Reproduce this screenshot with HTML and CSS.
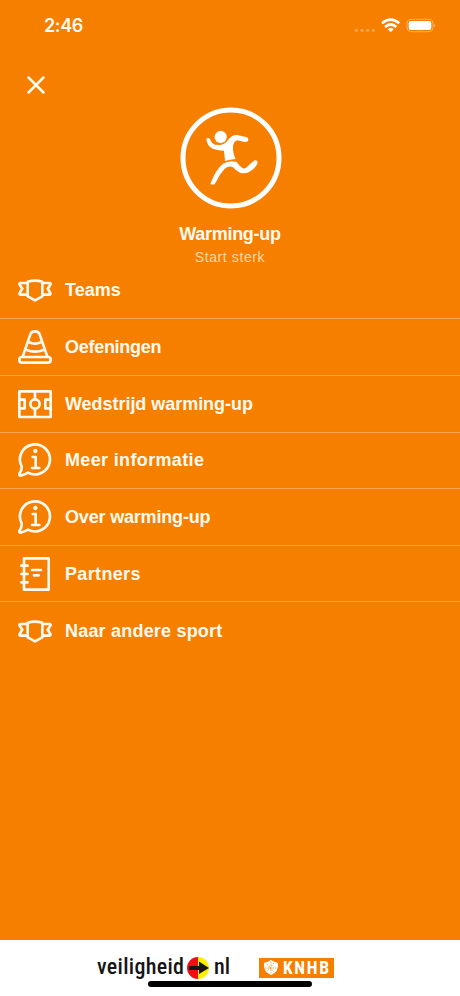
FILE: index.html
```html
<!DOCTYPE html>
<html lang="nl">
<head>
<meta charset="utf-8">
<meta name="viewport" content="width=device-width">
<title>Warming-up</title>
<link rel="stylesheet" href="styles.css">
</head>
<body>
<svg class="defs" width="0" height="0">
  <symbol id="shield" viewBox="0 0 102 102">
    <path d="M29 26Q51 20 73 26V70L51 82L29 70ZM29 30H7Q3 31 5 35L13 47L5 60Q3 64 7 65H29M73 30H95Q99 31 97 35L89 47L97 60Q99 64 95 65H73"/>
  </symbol>
  <symbol id="info" viewBox="0 0 102 102">
    <path d="M11 70A45 45 0 1 1 30 89Q20 95 8 98Q1 98 5 91Q12 82 11 70Z"/>
    <path d="M44 42H53V74M42 75H64"/><circle class="dot" cx="52" cy="24" r="6.500"/>
  </symbol>
</svg>
<div class="screen">
  <header class="status">
    <span class="time">2:46</span>
    <svg class="signals" width="84" height="18" viewBox="0 0 252 54">
      <g fill="#fff" opacity=".3"><circle cx="7" cy="34" r="5"/><circle cx="24" cy="34" r="5"/><circle cx="41" cy="34" r="5"/><circle cx="58" cy="34" r="5"/></g>
      <g fill="none" stroke="#fff" stroke-width="8"><path d="M84 13Q110 -9 136 13M93 24Q110 9 127 24"/></g>
      <path d="M101 31Q110 23 119 31L110 40Z" fill="#fff"/>
      <rect x="159" y="1" width="78" height="37" rx="12" fill="none" stroke="#fff" stroke-opacity=".4" stroke-width="3"/>
      <rect x="164" y="6" width="68" height="27" rx="7" fill="#fff"/>
      <path d="M241 14Q247 19 241 25Z" fill="#fff" opacity=".5"/>
    </svg>
  </header>
  <svg class="close" width="18" height="18" viewBox="0 0 18 18"><path d="M1.500 1.500L16.500 16.500M16.500 1.500L1.500 16.500"/></svg>
  <div class="hero">
    <svg class="runner" width="102" height="102" viewBox="28 35 306 306">
      <circle cx="181" cy="188" r="144" fill="none" stroke="#fff" stroke-width="15"/>
      <circle cx="150" cy="125" r="18.500" fill="#fff"/>
      <path d="M107 130Q113 126 118 131Q122 144 133 148L150 149Q167 144 174 132Q183 119 199 119L229 126Q236 132 231 138Q227 142 218 139L200 135Q189 139 187 152Q186 174 195 191Q178 193 163 197L160 166Q145 166 126 160Q108 150 107 130Z" fill="#fff"/>
      <path d="M119 266Q134 223 157 205Q177 193 198 200Q205 211 216 219Q226 221 234 210L252 195Q260 193 261 202Q256 216 240 227Q227 237 208 232Q195 226 187 216Q176 210 162 220Q146 237 136 260L132 267Q125 269 119 266Z" fill="#fff"/>
    </svg>
    <h1>Warming-up</h1>
    <p>Start sterk</p>
  </div>
  <nav>
    <a class="row teams"><svg class="icon"><use href="#shield"/></svg><span>Teams</span></a>
    <a class="row exercises"><svg class="icon" viewBox="0 0 102 102"><rect x="4" y="81" width="94" height="17" rx="8"/><path d="M14 80L37 13Q40 4 51 4Q62 4 65 13L88 80M32 36Q51 46 70 36M24 59Q51 71 78 59"/></svg><span>Oefeningen</span></a>
    <a class="row match"><svg class="icon" viewBox="0 0 102 102"><path d="M4 13H98V90H4ZM51 13V36M51 67V90M4 38H20V64H4M98 38H82V64H98"/><circle cx="51" cy="51" r="14"/></svg><span>Wedstrijd warming-up</span></a>
    <a class="row more"><svg class="icon"><use href="#info"/></svg><span>Meer informatie</span></a>
    <a class="row about"><svg class="icon"><use href="#info"/></svg><span>Over warming-up</span></a>
    <a class="row partners"><svg class="icon" viewBox="0 0 102 102"><path d="M18 4H92V98H18ZM10 26H29M10 51H29M10 76H29M42 39H69M48 55H62"/></svg><span>Partners</span></a>
    <a class="row sport"><svg class="icon"><use href="#shield"/></svg><span>Naar andere sport</span></a>
  </nav>
  <footer>
    <div class="safety">
      <svg width="136" height="32" viewBox="0 0 136 32">
        <text x="0" y="24" textLength="87" lengthAdjust="spacing">veiligheid</text>
        <path d="M101 7A11 11 0 0 0 101 29Z" fill="#f20d12"/><path d="M101 7A11 11 0 0 1 101 29Z" fill="#ffed00"/>
        <path d="M92 16H102V11.500L112 18L102 24V20H92Z"/>
        <text x="117" y="24" textLength="16" lengthAdjust="spacing">nl</text>
      </svg>
    </div>
    <div class="knhb">
      <svg width="75" height="20" viewBox="0 0 75 20">
        <path d="M5 5Q9 4 12 2Q15 4 19 5Q20 14 12 17Q4 14 5 5Z" fill="#fff"/>
        <path d="M8 6L15 14M15 5L8 13M6 10H18M12 4V15" stroke="#f77f00" stroke-width=".7" stroke-dasharray="1.500 1"/>
        <text x="24" y="16.200" textLength="46" lengthAdjust="spacing">KNHB</text>
      </svg>
    </div>
    <div class="home"></div>
  </footer>
</div>
</body>
</html>
```
FILE: styles.css
```css
* { box-sizing: border-box; }
body { margin: 0; background: #f77f00; color: #fffaf0; font-family: "Liberation Sans", Arial, sans-serif; }
.defs { position: absolute; }
.screen { width: 460px; height: 996px; display: flex; flex-direction: column; overflow: hidden; }
.status { height: 76px; padding: 16px 22px 0 44px; display: flex; justify-content: space-between; align-items: flex-start; }
.time { font: 600 18px/20px Inter, sans-serif; letter-spacing: -0.4px; }
.signals { margin-top: 3px; overflow: visible; }
.close { margin-left: 27px; stroke: #fffaf0; stroke-width: 2.5; stroke-linecap: round; flex: none; }
.hero { height: 168.6px; padding-top: 13px; display: flex; flex-direction: column; align-items: center; }
.runner { flex: none; margin-left: 1px; }
h1 { margin: 14px 0 0; font-size: 18px; line-height: 22px; letter-spacing: -0.3px; }
p { margin: 4px 0 0; font-size: 14px; line-height: 17px; letter-spacing: .6px; color: #ffd9ac; }
nav { display: flex; flex-direction: column; }
.row { height: 56.65px; padding: 0 18px; display: flex; align-items: center; gap: 13px; border-bottom: 1px solid #fba750; font-size: 18px; line-height: 22px; font-weight: 700; }
.row:last-child { border-bottom: 0; }
.exercises { letter-spacing: -0.28px; }
.match { letter-spacing: -0.04px; }
.more { letter-spacing: .35px; }
.about { letter-spacing: -0.18px; }
.partners { letter-spacing: .35px; }
.sport { letter-spacing: .2px; }
.icon { width: 34px; height: 34px; flex: none; fill: none; stroke: #fffaf0; stroke-width: 8; stroke-linecap: round; stroke-linejoin: round; }
.dot { fill: #fffaf0; stroke: none; }
footer { position: relative; height: 56px; margin-top: auto; background: #fff; display: flex; align-items: flex-start; padding-left: 97px; }
.safety { padding-top: 10px; }
.safety svg { display: block; font: 500 22px Roboto, sans-serif; font-stretch: 75%; fill: #161616; }
.knhb { margin: 18px 0 0 26px; background: #f77f00; height: 20px; }
.knhb svg { display: block; font: 700 17.5px Roboto, sans-serif; font-stretch: 80%; fill: #fff; }
.home { position: absolute; left: 148px; top: 41px; width: 164px; height: 6px; border-radius: 3px; background: #000; }
```
